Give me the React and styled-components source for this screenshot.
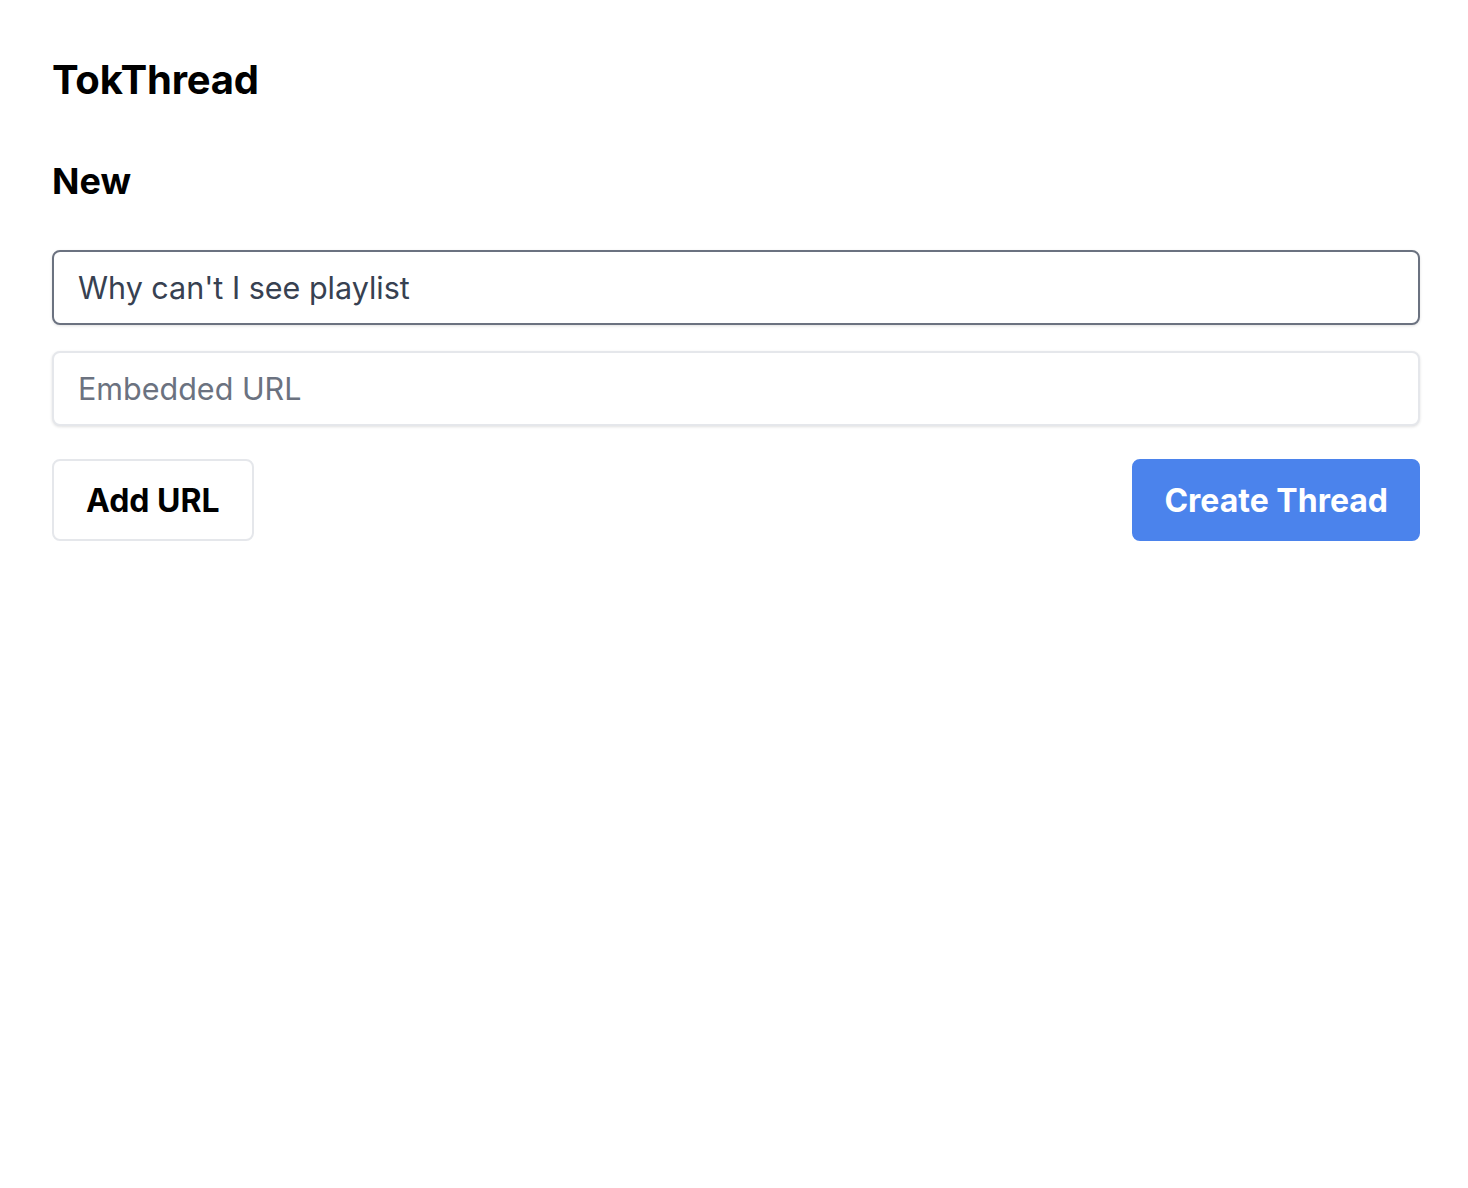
import React from 'react';
import styled, { createGlobalStyle } from 'styled-components';

const GlobalStyle = createGlobalStyle`
  body {
    margin: 0;
    background: #fff;
    font-family: Inter, "Liberation Sans", sans-serif;
    color: #000;
  }
`;

const App = () => {
  return (
    <Page>
      <GlobalStyle />
      <Brand>TokThread</Brand>
      <Heading>New</Heading>
      <Form>
        <TextInput defaultValue="Why can't I see playlist" $focused />
        <TextInput placeholder="Embedded URL" />
        <Actions>
          <Button>Add URL</Button>
          <Button $primary>Create Thread</Button>
        </Actions>
      </Form>
    </Page>
  );
};

const Page = styled.div`
  padding: 52px 48px 48px 52px;
  display: flex;
  flex-direction: column;
`;

const Brand = styled.h1`
  margin: 0;
  font-size: 40px;
  line-height: 56px;
  font-weight: 700;
  letter-spacing: -0.2px;
`;

const Heading = styled.h2`
  margin: 49px 0 0;
  font-size: 36px;
  line-height: 48px;
  font-weight: 700;
`;

const Form = styled.div`
  margin-top: 45px;
  display: flex;
  flex-direction: column;
  gap: 26px;
`;

const TextInput = styled.input`
  box-sizing: border-box;
  height: 75px;
  padding: 0 24px;
  font-family: Inter, "Liberation Sans", sans-serif;
  font-size: 30.5px;
  color: #374151;
  background: #fff;
  border: 2px solid ${p => (p.$focused ? '#6b7280' : '#e5e7eb')};
  border-radius: 8px;
  box-shadow: 0 1px 3px rgba(0, 0, 0, 0.12);
  outline: none;
  &::placeholder {
    color: #6b7280;
  }
`;

const Actions = styled.div`
  margin-top: 7px;
  display: flex;
  justify-content: space-between;
  align-items: center;
`;

const Button = styled.button`
  box-sizing: border-box;
  height: 82px;
  padding: 0 ${p => (p.$primary ? '30px' : '32px')};
  font-family: Inter, "Liberation Sans", sans-serif;
  font-size: 32px;
  font-weight: 700;
  border-radius: 8px;
  cursor: pointer;
  color: ${p => (p.$primary ? '#fff' : '#000')};
  background: ${p => (p.$primary ? '#4b83ec' : '#fff')};
  border: 2px solid ${p => (p.$primary ? '#4b83ec' : '#e5e7eb')};
`;

export default App;
